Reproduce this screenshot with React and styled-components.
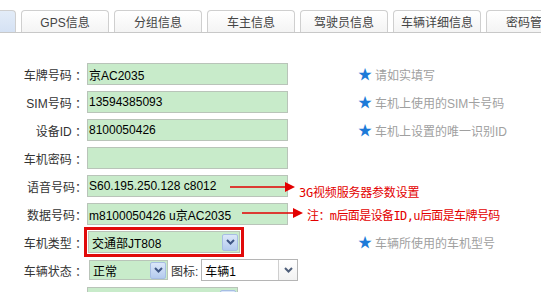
import React from "react";
import styled, { createGlobalStyle } from "styled-components";

const GlobalStyle = createGlobalStyle`
  html, body {
    margin: 0;
    padding: 0;
    background: #fff;
  }
  body {
    font-family: "Liberation Sans", "Noto Sans CJK SC", sans-serif;
    font-size: 12px;
    color: #333;
  }
`;

const Page = styled.div`
  width: 541px;
  height: 292px;
  overflow: hidden;
`;

const TabStrip = styled.div`
  overflow: hidden;
  border-bottom: 1px solid #c8c8c8;
`;

const TabRow = styled.div`
  display: flex;
  gap: 5px;
  margin-left: -72px;
  padding-top: 10px;
`;

const Tab = styled.div`
  flex: none;
  width: 86px;
  height: 21px;
  border: 1px solid #cfcfcf;
  border-bottom: none;
  border-radius: 4px 4px 0 0;
  background: ${(p) =>
    p.$active ? "linear-gradient(#e3ecf8, #d5e2f4)" : "linear-gradient(#ffffff, #f4f4f4)"};
  display: flex;
  align-items: center;
  justify-content: center;
  color: #444;
  font-size: 12px;
  white-space: nowrap;
`;

const Form = styled.div`
  padding-top: 27px;
`;

const Row = styled.div`
  position: relative;
  display: grid;
  grid-template-columns: 87px 271px 1fr;
  align-items: center;
  height: 28px;
`;

const Label = styled.div`
  text-align: right;
  white-space: pre;
  color: #333;
`;

const Field = styled.div`
  display: flex;
  align-items: center;
  gap: 3px;
`;

const TextBox = styled.div`
  box-sizing: border-box;
  width: 201px;
  height: 22px;
  border: 1px solid #b9c4b9;
  background: #c8ebca;
  color: #000;
  display: flex;
  align-items: center;
  padding-left: 1px;
  font-size: 12px;
`;

const SelectBox = styled.div`
  box-sizing: border-box;
  width: ${(p) => p.$w}px;
  height: ${(p) => p.$h || 22}px;
  margin-left: ${(p) => p.$ml || 0}px;
  border: 1px solid ${(p) => (p.$plain ? "#b5b5b5" : "#b9c4b9")};
  background: ${(p) => (p.$plain ? "#fff" : "#c8ebca")};
  outline: ${(p) => (p.$marked ? "3px solid #e10a0a" : "none")};
  outline-offset: 1px;
  display: flex;
  align-items: center;
  color: #000;
  font-size: 12px;
`;

const SelectText = styled.span`
  flex: 1;
  padding-left: 3px;
  white-space: nowrap;
`;

const DropBtn = styled.span`
  box-sizing: border-box;
  flex: none;
  width: ${(p) => (p.$plain ? 19 : 16)}px;
  height: ${(p) => (p.$plain ? "100%" : "17px")};
  margin-right: ${(p) => (p.$plain ? 0 : 1)}px;
  display: flex;
  align-items: center;
  justify-content: center;
  border: ${(p) => (p.$plain ? "none" : "1px solid #a7bde3")};
  border-left: 1px solid ${(p) => (p.$plain ? "#cfcfcf" : "#a7bde3")};
  border-radius: ${(p) => (p.$plain ? 0 : 2)}px;
  background: ${(p) =>
    p.$plain ? "linear-gradient(#ffffff, #f2f2f2)" : "linear-gradient(#dbe7f9, #b4cbee)"};
`;

const InlineLabel = styled.span`
  color: #333;
  white-space: nowrap;
`;

const Hint = styled.div`
  display: flex;
  align-items: center;
  gap: 3px;
  color: #a0a0a0;
  white-space: nowrap;
`;

const Star = styled.span`
  color: #1d7ad8;
  font-size: 14px;
  line-height: 1;
`;

const Note = styled.div`
  position: absolute;
  left: ${(p) => p.$x}px;
  top: ${(p) => p.$y}px;
  display: flex;
  align-items: center;
  color: #e30000;
  font-size: 12px;
  white-space: nowrap;
  pointer-events: none;
`;

const NoteText = styled.span`
  margin-top: ${(p) => p.$dy || 0}px;
  margin-left: ${(p) => p.$gap || 4}px;
  font-family: "DejaVu Sans Mono", "Noto Sans CJK SC", monospace;
  font-size: 12px;
  letter-spacing: ${(p) => p.$ls || 0}px;
`;

const Chevron = ({ color }) => (
  <svg width="9" height="6" viewBox="0 0 9 6">
    <path d="M1 1 L4.5 4.5 L8 1" fill="none" stroke={color} strokeWidth="2" />
  </svg>
);

const Arrow = ({ len }) => (
  <svg width={len} height="12" viewBox={`0 0 ${len} 12`}>
    <line x1="0" y1="6" x2={len - 9} y2="6" stroke="#e30000" strokeWidth="1.5" />
    <polygon points={`${len - 10},1 ${len},6 ${len - 10},11`} fill="#e30000" />
  </svg>
);

const Select = ({ w, h, ml, plain, marked, children }) => (
  <SelectBox $w={w} $h={h} $ml={ml} $plain={plain} $marked={marked}>
    <SelectText>{children}</SelectText>
    <DropBtn $plain={plain}>
      <Chevron color={plain ? "#4f5f7a" : "#3f5785"} />
    </DropBtn>
  </SelectBox>
);

const tabs = ["", "GPS信息", "分组信息", "车主信息", "驾驶员信息", "车辆详细信息", "密码管理"];

const rows = [
  { label: "车牌号码 ：", value: "京AC2035", hint: "请如实填写" },
  { label: "SIM号码 ：", value: "13594385093", hint: "车机上使用的SIM卡号码" },
  { label: "设备ID ：", value: "8100050426", hint: "车机上设置的唯一识别ID" },
  { label: "车机密码 ：", value: "" },
  {
    label: "语音号码：",
    value: "S60.195.250.128 c8012",
    note: { x: 230, y: 2, len: 65, text: "3G视频服务器参数设置", dy: 9, gap: 4, ls: -0.2 },
  },
  {
    label: "数据号码：",
    value: "m8100050426 u京AC2035",
    note: { x: 242, y: 2, len: 61, text: "注：m后面是设备ID,u后面是车牌号码", dy: 4, gap: 4, ls: -0.6 },
  },
];

export default function App() {
  return (
    <Page>
      <GlobalStyle />
      <TabStrip>
        <TabRow>
          {tabs.map((t, i) => (
            <Tab key={i} $active={i === 0}>
              {t}
            </Tab>
          ))}
        </TabRow>
      </TabStrip>
      <Form>
        {rows.map((r) => (
          <Row key={r.label}>
            <Label>{r.label}</Label>
            <Field>
              <TextBox>{r.value}</TextBox>
            </Field>
            {r.hint ? (
              <Hint>
                <Star>★</Star>
                {r.hint}
              </Hint>
            ) : (
              <span />
            )}
            {r.note && (
              <Note $x={r.note.x} $y={r.note.y}>
                <Arrow len={r.note.len} />
                <NoteText $dy={r.note.dy} $gap={r.note.gap} $ls={r.note.ls}>
                  {r.note.text}
                </NoteText>
              </Note>
            )}
          </Row>
        ))}
        <Row>
          <Label>{"车机类型 ："}</Label>
          <Field>
            <Select w={152} ml={1} marked>
              交通部JT808
            </Select>
          </Field>
          <Hint>
            <Star>★</Star>
            车辆所使用的车机型号
          </Hint>
        </Row>
        <Row>
          <Label>{"车辆状态 ："}</Label>
          <Field>
            <Select w={79} h={20} ml={2}>
              正常
            </Select>
            <InlineLabel>图标:</InlineLabel>
            <Select w={97} h={22} plain>
              车辆1
            </Select>
          </Field>
          <span />
        </Row>
        <Row>
          <Label>{""}</Label>
          <Field>
            <Select w={151} />
          </Field>
          <span />
        </Row>
      </Form>
    </Page>
  );
}
